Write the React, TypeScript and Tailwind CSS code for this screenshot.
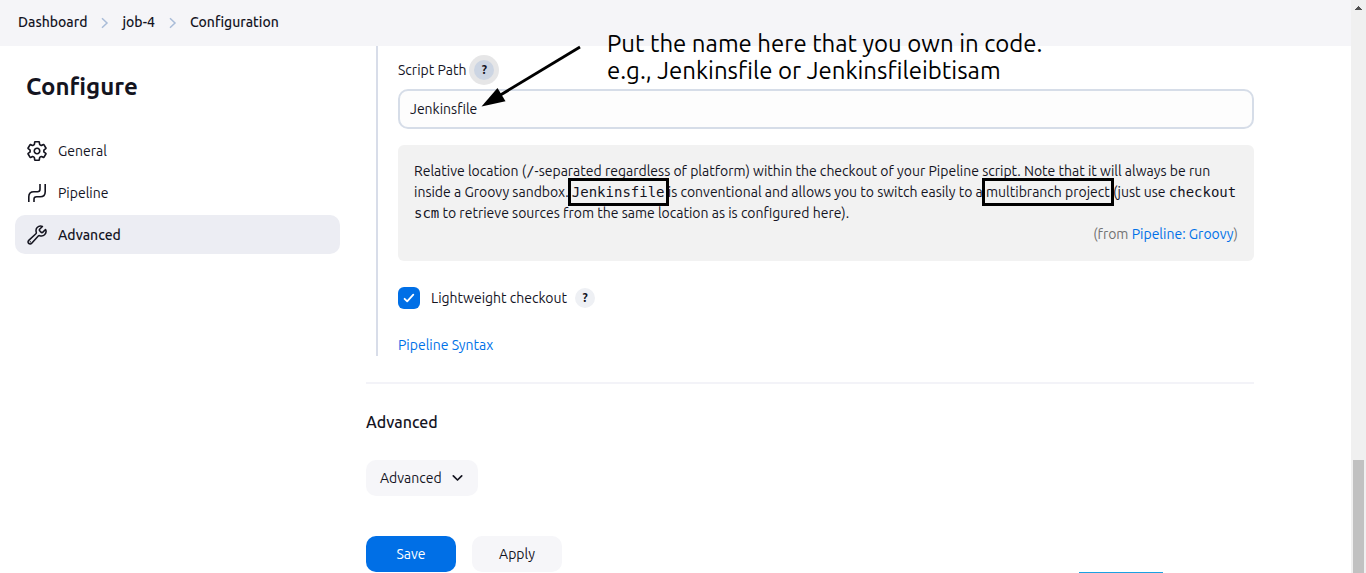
import React from "react";

const sans = "font-['Ubuntu','Noto_Sans',sans-serif]";

function Crumb({ children }: { children: React.ReactNode }) {
  return (
    <a href="#" className="font-medium">
      {children}
    </a>
  );
}

function CrumbArrow() {
  return (
    <svg className="mt-0.5 h-3 w-[9px]" viewBox="0 0 9 12" fill="none" stroke="#a9bcd8" strokeWidth="1.5" aria-hidden="true">
      <path d="M2 1.2 7 6 2 10.8" />
    </svg>
  );
}

function GearIcon() {
  return (
    <svg className="size-5" viewBox="0 0 512 512" fill="none" stroke="currentColor" strokeWidth="38" strokeLinecap="round" strokeLinejoin="round" aria-hidden="true">
      <g transform="translate(256 256) scale(1.1) translate(-256 -256)">
        <path d="M262.29 192.31a64 64 0 1057.4 57.4 64.13 64.13 0 00-57.4-57.4zM416.39 256a154.34 154.34 0 01-1.53 20.79l45.21 35.46a10.81 10.81 0 012.45 13.75l-42.77 74a10.81 10.81 0 01-13.14 4.59l-44.9-18.08a16.11 16.11 0 00-15.17 1.75A164.48 164.48 0 01325 400.8a15.94 15.94 0 00-8.82 12.14l-6.73 47.89a11.08 11.08 0 01-10.68 9.17h-85.54a11.11 11.11 0 01-10.69-8.87l-6.72-47.82a16.07 16.07 0 00-9-12.22 155.3 155.3 0 01-21.46-12.57 16 16 0 00-15.11-1.71l-44.89 18.07a10.81 10.81 0 01-13.14-4.58l-42.77-74a10.8 10.8 0 012.45-13.75l38.21-30a16.05 16.05 0 006-14.08c-.36-4.17-.58-8.33-.58-12.5s.21-8.27.58-12.35a16 16 0 00-6.07-13.94l-38.19-30A10.81 10.81 0 0149.48 186l42.77-74a10.81 10.81 0 0113.14-4.59l44.9 18.08a16.11 16.11 0 0015.17-1.75A164.48 164.48 0 01187 111.2a15.94 15.94 0 008.82-12.14l6.73-47.89A11.08 11.08 0 01213.23 42h85.54a11.11 11.11 0 0110.69 8.87l6.72 47.82a16.07 16.07 0 009 12.22 155.3 155.3 0 0121.46 12.57 16 16 0 0015.11 1.71l44.89-18.07a10.81 10.81 0 0113.14 4.58l42.77 74a10.8 10.8 0 01-2.45 13.75l-38.21 30a16.05 16.05 0 00-6.05 14.08c.33 4.14.55 8.3.55 12.47z" />
      </g>
    </svg>
  );
}

function PipelineIcon() {
  return (
    <svg className="size-5" viewBox="0 0 20 20" fill="none" stroke="currentColor" strokeWidth="1.6" aria-hidden="true">
      <path d="M1.8 19v-5.200c0-3.600 1.500-5.100 5.100-5.100h3.600c1.700 0 2.500-.8 2.500-2.500V1" />
      <path d="M7 19v-2.700c0-1.700.8-2.500 2.500-2.500h3.600c3.600 0 5.100-1.500 5.100-5.100V1" />
    </svg>
  );
}

function WrenchIcon() {
  return (
    <svg className="size-5" viewBox="0 0 512 512" fill="none" stroke="currentColor" strokeWidth="36" strokeLinecap="round" strokeLinejoin="round" aria-hidden="true">
      <g transform="translate(256 256) scale(1.1) translate(-256 -256)">
        <path d="M393.87 190a32.1 32.1 0 01-45.25 0l-26.57-26.57a32.09 32.09 0 010-45.26L382.19 58a1 1 0 00-.3-1.64c-38.82-16.64-89.15-8.16-121.11 23.57-30.58 30.35-32.32 76-21.12 115.84a31.93 31.93 0 01-9.06 32.08L64 380a48.17 48.17 0 1068 68l153.86-167a31.93 31.93 0 0131.6-9.13c39.54 10.59 84.54 8.6 114.72-21.19 32.49-32 39.5-88.56 23.75-120.93a1 1 0 00-1.6-.26z" />
        <circle cx="96" cy="416" r="9" fill="currentColor" strokeWidth="10" />
      </g>
    </svg>
  );
}

function NavItem({ icon, label, active }: { icon: React.ReactNode; label: string; active?: boolean }) {
  return (
    <a
      href="#"
      className={
        active
          ? "flex h-[39px] items-center gap-[11px] rounded-[10px] bg-[#ecedf3] px-3 font-medium"
          : "flex h-[39px] items-center gap-[11px] rounded-[10px] px-3"
      }
    >
      {icon}
      <span className="pt-0.5">{label}</span>
    </a>
  );
}

function Code({ children }: { children: React.ReactNode }) {
  return <code className="font-['DejaVu_Sans_Mono',monospace]">{children}</code>;
}

function Marked({ children }: { children: React.ReactNode }) {
  return (
    <span className="relative">
      {children}
      <span className="pointer-events-none absolute -inset-x-1 -inset-y-1.5 border-3 border-black" />
    </span>
  );
}

export default function App() {
  return (
    <div className={`${sans} relative flex min-h-screen overflow-hidden bg-white text-sm leading-[21px] text-[#14141f]`}>
      <div className="relative flex min-w-0 flex-1 flex-col">
        <header className="flex h-[46px] items-center bg-[#f5f5f8] px-[18px] pb-0.5">
          <nav aria-label="Breadcrumb" className="flex items-center gap-[13px]">
            <Crumb>Dashboard</Crumb>
            <CrumbArrow />
            <Crumb>job-4</Crumb>
            <CrumbArrow />
            <Crumb>Configuration</Crumb>
          </nav>
        </header>

        <div className="flex flex-1">
          <aside className="w-[340px] shrink-0 pl-[15px]">
            <h1 className="mt-[25px] ml-[11px] text-2xl leading-8 font-bold">Configure</h1>
            <nav aria-label="Sections" className="mt-7 flex flex-col gap-[3px]">
              <NavItem icon={<GearIcon />} label="General" />
              <NavItem icon={<PipelineIcon />} label="Pipeline" />
              <NavItem icon={<WrenchIcon />} label="Advanced" active />
            </nav>
          </aside>

          <main className="min-w-0 flex-1 pr-[97px] pl-[26px]">
            <section className="ml-[10px] border-l-2 border-[#d8dde9] pl-5">
              <div className="flex items-center gap-[3px] pt-[9px]">
                <label htmlFor="script-path">Script Path</label>
                <button
                  type="button"
                  aria-label="Help for script path"
                  className="flex size-[30px] items-center justify-center rounded-full bg-[#e6e6e7]"
                >
                  <span className="flex size-5 items-center justify-center rounded-full bg-[#ccd5e3] text-xs font-bold">?</span>
                </button>
              </div>
              <input
                id="script-path"
                type="text"
                defaultValue="Jenkinsfile"
                className="mt-1 block h-10 w-full rounded-[10px] border-2 border-[#d6dde8] bg-[#fdfdfd] px-[10px] outline-none"
              />

              <div className="mt-4 rounded-[6px] bg-[#f2f2f2] p-4">
                <p>
                  Relative location (<Code>/</Code>-separated regardless of platform) within the checkout of your Pipeline script. Note that it will always be run
                  inside a Groovy sandbox.{" "}
                  <Marked>
                    <Code>Jenkinsfile</Code>
                  </Marked>{" "}
                  is conventional and allows you to switch easily to a <Marked>multibranch project</Marked> (just use{" "}
                  <Code>checkout scm</Code> to retrieve sources from the same location as is configured here).
                </p>
                <p className="text-right text-[#737373]">
                  (from{" "}
                  <a href="#" className="text-[#0071e8]">
                    Pipeline: Groovy
                  </a>
                  )
                </p>
              </div>

              <div className="mt-[26px] flex h-[22px] items-center">
                <label className="flex items-center gap-[11px]">
                  <span className="relative flex size-[22px]">
                    <input type="checkbox" defaultChecked className="size-[22px] appearance-none rounded-[6px] bg-[#006fe6]" />
                    <svg className="pointer-events-none absolute inset-0 size-[22px]" viewBox="0 0 22 22" fill="none" stroke="white" strokeWidth="1.8" strokeLinecap="round" strokeLinejoin="round" aria-hidden="true">
                      <path d="M6.600 11.800 9.200 14.400 15.300 7.600" />
                    </svg>
                  </span>
                  Lightweight checkout
                </label>
                <button
                  type="button"
                  aria-label="Help for lightweight checkout"
                  className="ml-2 flex size-5 items-center justify-center rounded-full bg-[#eef0f4] text-xs font-bold"
                >
                  ?
                </button>
              </div>

              <div className="pt-[26px]">
                <a href="#" className="block text-[#0071e8]">
                  Pipeline Syntax
                </a>
              </div>
            </section>

            <hr className="mt-[26px] border-t-2 border-[#f3f3f8]" />

            <h2 className="mt-[26px] text-base leading-6 font-medium">Advanced</h2>
            <button type="button" className="mt-[26px] flex h-9 items-center gap-[10px] rounded-[10px] bg-[#f6f6f9] px-[14px]">
              Advanced
              <svg className="h-3 w-3" viewBox="0 0 12 12" fill="none" stroke="currentColor" strokeWidth="1.7" strokeLinecap="round" strokeLinejoin="round" aria-hidden="true">
                <path d="M1.300 3.800 5.500 8 9.700 3.800" />
              </svg>
            </button>

            <div className="mt-10 flex gap-4">
              <button type="button" className="h-9 w-[90px] rounded-[10px] bg-[#006fe6] text-white">
                Save
              </button>
              <button type="button" className="h-9 w-[90px] rounded-[10px] bg-[#f6f6f9]">
                Apply
              </button>
            </div>
          </main>
        </div>
      </div>

      <div className="flex w-[15px] shrink-0 flex-col items-center bg-[#f0f0f0]" aria-hidden="true">
        <svg className="mt-1.5 h-1 w-[7px]" viewBox="0 0 7 4" fill="#505050">
          <path d="M3 0h1v1h1v1h1v1h1v1H0V3h1V2h1V1h1z" />
        </svg>
        <div className="flex-1" />
        <div className="h-[113px] w-[11px] bg-[#c1c1c1]" />
      </div>

      <svg className="pointer-events-none absolute top-[44px] left-[480px] h-16 w-[104px]" viewBox="480 44 104 64" aria-hidden="true">
        <path d="M580 47 498 96.5" stroke="black" strokeWidth="2.8" />
        <path d="M481.500 106.500 497.500 88 505.500 101.300z" />
      </svg>
      <p className="pointer-events-none absolute top-[30px] left-[607px] text-2xl leading-[27px] whitespace-nowrap text-black">
        Put the name here that you own in code.
        <br />
        e.g., Jenkinsfile or Jenkinsfileibtisam
      </p>
      <div className="absolute right-[203px] bottom-0 h-px w-[84px] bg-[#1ba1e2]" />
    </div>
  );
}
